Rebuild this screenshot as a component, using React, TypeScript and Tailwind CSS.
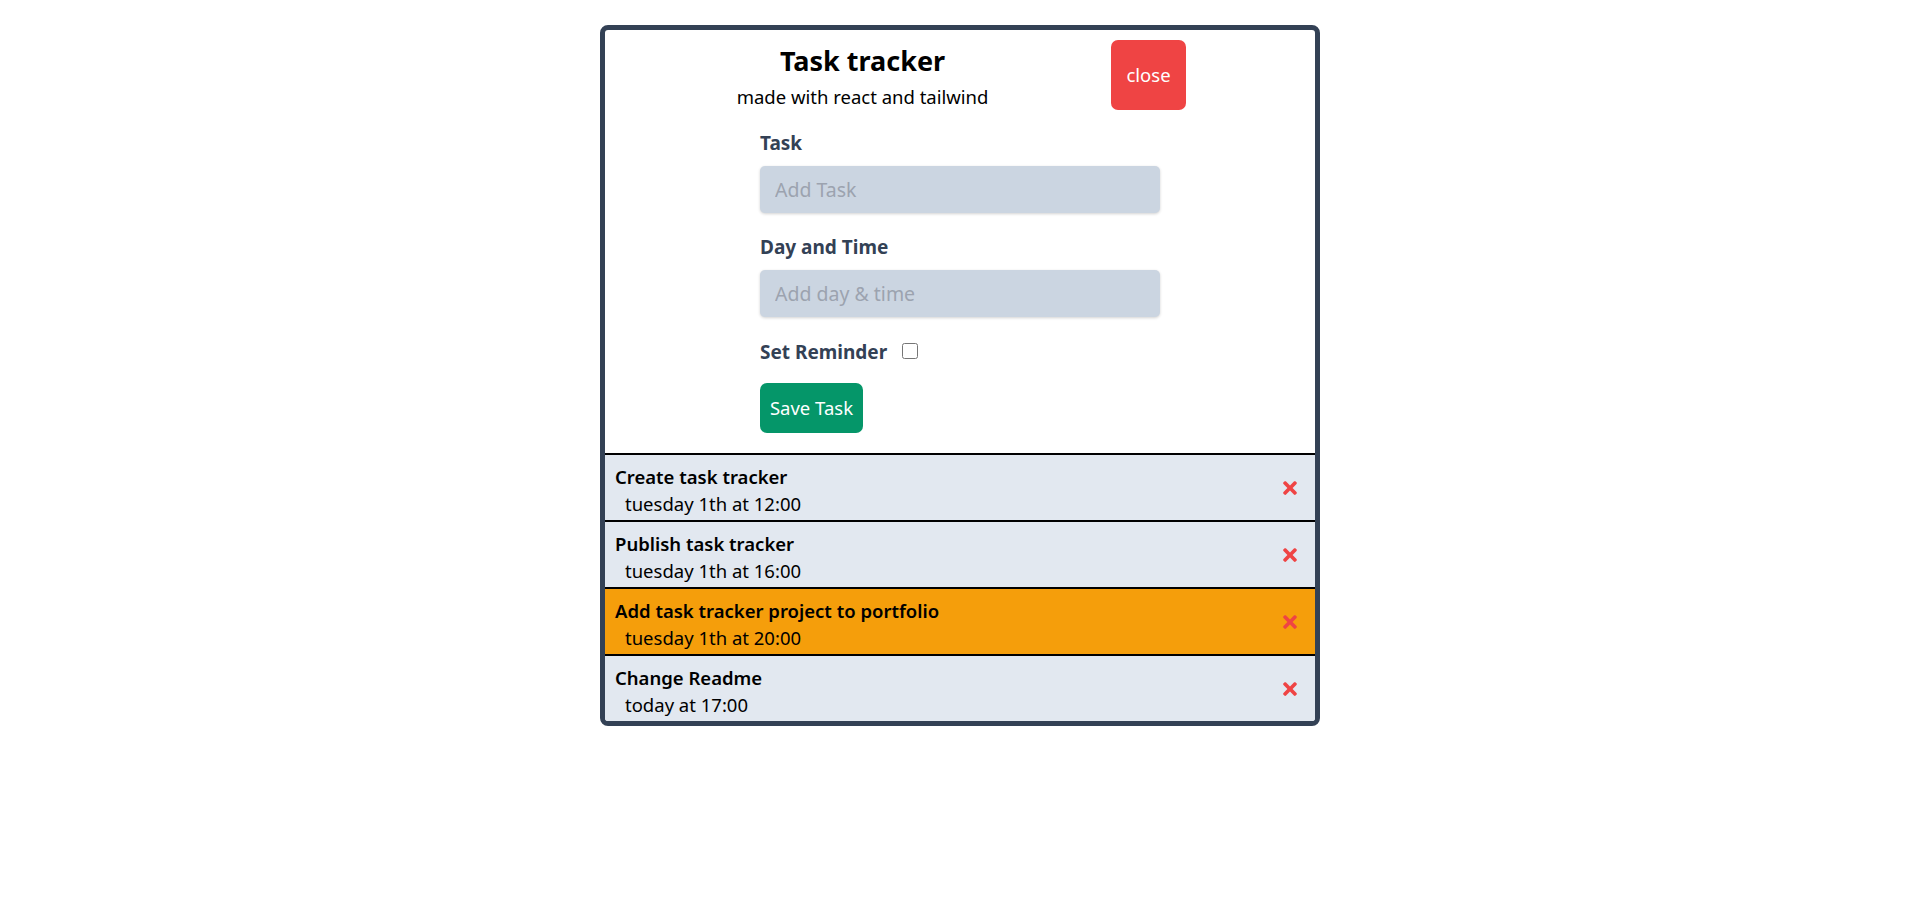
import React from "react";
import { FaTimes } from "react-icons/fa";

const tasks = [
  { id: 1, text: "Create task tracker", day: "tuesday 1th at 12:00", reminder: false },
  { id: 2, text: "Publish task tracker", day: "tuesday 1th at 16:00", reminder: false },
  { id: 3, text: "Add task tracker project to portfolio", day: "tuesday 1th at 20:00", reminder: true },
  { id: 4, text: "Change Readme", day: "today at 17:00", reminder: false },
];

export default function App() {
  return (
    <div className="min-h-[923px] bg-white font-['Noto_Sans',sans-serif] text-black">
      <div className="mx-auto mt-[25px] w-[720px] overflow-hidden rounded-[8px] border-[5px] border-[#334155]">
        <header className="flex items-start gap-[122px] pl-[131px] pt-[10px]">
          <div className="w-[253px] shrink-0 text-center">
            <h1 className="mt-[4px] whitespace-nowrap text-[27px] font-bold leading-[34px]">Task tracker</h1>
            <p className="mt-[7px] whitespace-nowrap text-[18.5px] leading-[24px]">made with react and tailwind</p>
          </div>
          <button className="flex h-[70px] w-[75px] shrink-0 items-center justify-center rounded-[7px] bg-[#ef4444] text-[18.5px] text-white">
            close
          </button>
        </header>

        <form className="mx-auto mt-[18px] w-[400px] pb-5" onSubmit={(e) => e.preventDefault()}>
          <div className="mb-[19px]">
            <label className="mb-[7px] block text-[19px] font-bold leading-[31px] text-[#334155]">Task</label>
            <input
              type="text"
              placeholder="Add Task"
              className="h-[47px] w-full rounded-[5px] bg-[#cbd5e1] px-[15px] text-[19.5px] text-[#334155] shadow-[0_1px_3px_rgba(0,0,0,0.18)] outline-none placeholder:text-[#9ca3af]"
            />
          </div>
          <div className="mb-[19px]">
            <label className="mb-[7px] block text-[19px] font-bold leading-[31px] text-[#334155]">Day and Time</label>
            <input
              type="text"
              placeholder="Add day & time"
              className="h-[47px] w-full rounded-[5px] bg-[#cbd5e1] px-[15px] text-[19.5px] text-[#334155] shadow-[0_1px_3px_rgba(0,0,0,0.18)] outline-none placeholder:text-[#9ca3af]"
            />
          </div>
          <div className="flex h-[30px] items-center">
            <label className="pt-[1px] text-[19px] font-bold leading-[30px] text-[#334155]">Set Reminder</label>
            <input type="checkbox" className="ml-[15px] h-[16px] w-[16px]" />
          </div>
          <button
            type="submit"
            className="mt-[17px] flex h-[50px] w-[103px] items-center justify-center rounded-[7px] bg-[#059669] text-[18.5px] text-white"
          >
            Save Task
          </button>
        </form>

        <div>
          {tasks.map((t) => (
            <div
              key={t.id}
              className={
                "flex h-[67px] justify-between border-t-2 border-black " +
                (t.reminder ? "bg-[#f59e0b]" : "bg-[#e2e8f0]")
              }
            >
              <div className="pl-[10px] pt-[8px]">
                <h3 className="text-[18.5px] font-semibold leading-[27px]">{t.text}</h3>
                <p className="pl-[10px] text-[18.5px] leading-[27px]">{t.day}</p>
              </div>
              <div className="flex items-center pr-[15px]">
                <FaTimes className="h-[20px] w-[20px] text-[#ef4444]" />
              </div>
            </div>
          ))}
        </div>
      </div>
    </div>
  );
}
